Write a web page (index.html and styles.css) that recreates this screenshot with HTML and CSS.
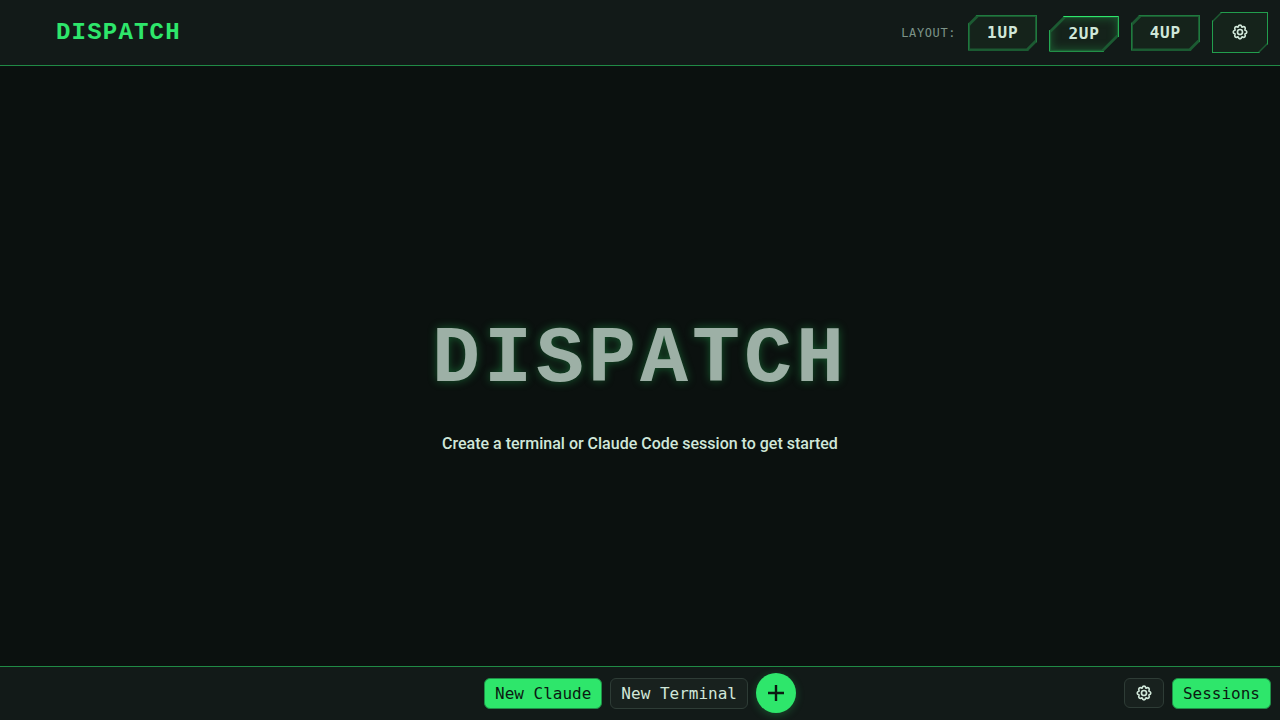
FILE: index.html
```html
<!DOCTYPE html>
<html lang="en">
<head>
<meta charset="utf-8">
<meta name="viewport" content="width=device-width, initial-scale=1">
<title>Dispatch</title>
<link rel="stylesheet" href="styles.css">
</head>
<body>
<svg class="sprite" aria-hidden="true">
  <symbol id="gear" viewBox="0 0 24 24" fill="none" stroke="currentColor" stroke-linejoin="round">
    <path stroke-width="2.5" d="M12 1.8 Q14 1.8 15 4.7 Q17.800 3.400 19.200 4.800 Q20.600 6.200 19.300 9 Q22.200 10 22.200 12 Q22.200 14 19.300 15 Q20.600 17.800 19.200 19.200 Q17.800 20.600 15 19.300 Q14 22.200 12 22.200 Q10 22.200 9 19.300 Q6.200 20.600 4.800 19.200 Q3.400 17.800 4.700 15 Q1.800 14 1.800 12 Q1.800 10 4.700 9 Q3.400 6.200 4.800 4.800 Q6.200 3.400 9 4.700 Q10 1.800 12 1.800 Z"/>
    <circle cx="12" cy="12" r="3.8" stroke-width="2.5"/>
  </symbol>
</svg>
<header class="topbar">
  <div class="brand">DISPATCH</div>
  <div class="layout" role="group" aria-labelledby="layout-label">
    <span class="layout-label" id="layout-label">LAYOUT:</span>
    <button class="cut" type="button">1UP</button>
    <button class="cut cut-active" type="button" aria-pressed="true">2UP</button>
    <button class="cut" type="button">4UP</button>
    <button class="cut cut-settings" type="button" aria-label="Settings"><svg class="icon"><use href="#gear"/></svg></button>
  </div>
</header>
<main class="empty">
  <h1 class="title">DISPATCH</h1>
  <p class="hint">Create a terminal or Claude Code session to get started</p>
</main>
<footer class="bottombar">
  <div class="actions">
    <button class="btn btn-primary" type="button">New Claude</button>
    <button class="btn" type="button">New Terminal</button>
    <button class="fab" type="button" aria-label="Add"><svg class="plus" viewBox="0 0 16 16"><path d="M8 0V16M0 8H16" stroke="currentColor" stroke-width="2.400"/></svg></button>
  </div>
  <div class="tools">
    <button class="btn btn-icon" type="button" aria-label="Terminal settings"><svg class="icon"><use href="#gear"/></svg></button>
    <button class="btn btn-primary" type="button">Sessions</button>
  </div>
</footer>
</body>
</html>
```
FILE: styles.css
```css
* { box-sizing: border-box; }
body {
  margin: 0;
  min-height: 100vh;
  display: flex;
  flex-direction: column;
  background: #0b110f;
  color: #d0e7d9;
  font: 16px/20px "DejaVu Sans Mono", monospace;
}
button { font: inherit; color: inherit; margin: 0; }
.sprite { display: none; }
.icon { display: block; width: 16px; height: 16px; }

.topbar {
  display: flex;
  align-items: center;
  justify-content: space-between;
  padding: 12px 12px 12px 56px;
  background: #121a18;
  border-bottom: 1px solid #208a45;
}
.brand {
  font: bold 24px/28px "Liberation Mono", monospace;
  letter-spacing: 0.05em;
  color: #2ee66b;
}
.layout { display: flex; align-items: center; gap: 12px; }
.layout-label {
  font-size: 12px;
  letter-spacing: 0.05em;
  color: #7c9388;
}

.cut {
  --cut: 9px;
  position: relative;
  isolation: isolate;
  padding: 7px 18px;
  border: 1px solid #1f7a3e;
  background: #1c5a32;
  font-weight: bold;
  letter-spacing: 0.05em;
  clip-path: polygon(var(--cut) 0, 100% 0, 100% calc(100% - var(--cut)), calc(100% - var(--cut)) 100%, 0 100%, 0 var(--cut));
}
.cut::before {
  content: "";
  position: absolute;
  z-index: -1;
  inset: 1px;
  background: #15231b;
  clip-path: polygon(var(--cut) 0, 100% 0, 100% calc(100% - var(--cut)), calc(100% - var(--cut)) 100%, 0 100%, 0 var(--cut));
}
.cut-active {
  --cut: 15px;
  border-color: #2ee66b;
  top: 1px;
}
.cut-active::before { box-shadow: inset 0 0 10px #1b5a31; }
.cut-settings { padding: 11px 19px 12px; border-color: #229e4d; }
.cut-settings::before { inset: 0; }

.empty {
  flex: 1;
  display: flex;
  flex-direction: column;
  align-items: center;
  justify-content: center;
  gap: 24px;
  padding: 60px 24px 24px;
  text-align: center;
}
.title {
  margin: 0;
  font: bold 80px/96px "Liberation Mono", monospace;
  letter-spacing: 0.05em;
  color: #9db0a6;
  text-shadow: 0 0 10px rgba(46, 230, 107, 0.35);
}
.hint {
  margin: 0;
  font: 500 16px/24px Roboto, sans-serif;
}

.bottombar {
  display: grid;
  grid-template-columns: 1fr auto 1fr;
  align-items: center;
  padding: 6px 9px 7px;
  background: #121a18;
  border-top: 1px solid #208a45;
}
.actions { grid-column: 2; display: flex; align-items: center; gap: 8px; }
.tools { display: flex; align-items: center; justify-content: flex-end; gap: 8px; }
.btn {
  padding: 5px 10px 4px;
  border: 1px solid #2e3c36;
  border-radius: 6px;
  background: #18211e;
}
.btn-primary {
  background: #2ee66b;
  border-color: #1f8f47;
  color: #0b1a12;
}
.btn-icon { padding: 6px 11px; }
.fab {
  display: grid;
  place-items: center;
  width: 40px;
  height: 40px;
  padding: 0;
  border: 0;
  border-radius: 50%;
  background: #2ee66b;
  color: #0b1a12;
  box-shadow: 0 2px 8px rgba(46, 230, 107, 0.25);
}
.plus { width: 16px; height: 16px; }
```
